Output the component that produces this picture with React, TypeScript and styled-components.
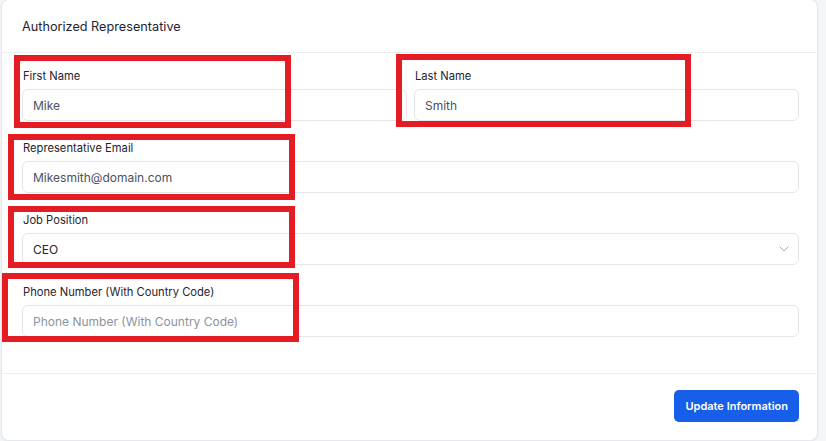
import React from 'react';
import styled, { createGlobalStyle } from 'styled-components';

const GlobalStyle = createGlobalStyle`
  html, body {
    margin: 0;
    padding: 0;
    background: #f4f5f7;
    font-family: Inter, "Noto Sans", Arial, sans-serif;
  }
`;

interface Mark {
  left: number;
  top: number;
  right: number;
  bottom: number;
}

// red annotation boxes drawn over the form
const marks: Mark[] = [
  { left: 14, top: 55, right: 291, bottom: 128 },
  { left: 396, top: 54, right: 691, bottom: 127 },
  { left: 8, top: 134, right: 295, bottom: 200 },
  { left: 8, top: 206, right: 295, bottom: 268 },
  { left: 2, top: 273, right: 299, bottom: 342 },
];

const Chevron = () => (
  <svg width="10" height="6" viewBox="0 0 10 6" fill="none">
    <path d="M1 1l4 4 4-4" stroke="#a3a8b3" strokeWidth="1" strokeLinecap="round" strokeLinejoin="round"/>
  </svg>
);

const App = () => {
  return (
    <Page>
      <GlobalStyle/>
      <Card>
        <Header>Authorized Representative</Header>
        <Body>
          <Row>
            <Field>
              <Label>First Name</Label>
              <Input defaultValue="Mike"/>
            </Field>
            <Field>
              <Label>Last Name</Label>
              <Input defaultValue="Smith"/>
            </Field>
          </Row>
          <Field>
            <Label>Representative Email</Label>
            <Input defaultValue="Mikesmith@domain.com"/>
          </Field>
          <Field>
            <Label>Job Position</Label>
            <SelectBox>
              <span>CEO</span>
              <Chevron/>
            </SelectBox>
          </Field>
          <Field>
            <Label>Phone Number (With Country Code)</Label>
            <Input placeholder="Phone Number (With Country Code)"/>
          </Field>
        </Body>
        <Footer>
          <Button>Update Information</Button>
        </Footer>
      </Card>
      {marks.map((m, i) =>
        <Highlight key={i} style={{ left: m.left, top: m.top, width: m.right - m.left, height: m.bottom - m.top }}/>
      )}
    </Page>
  );
};

const Page = styled.div`
  position: relative;
  width: 826px;
  height: 441px;
  overflow: hidden;
  padding: 0 0 0 1px;
  box-sizing: border-box;
`;

const Card = styled.div`
  width: 817px;
  margin-top: -1px;
  height: 442px;
  box-sizing: border-box;
  background: #fff;
  border: 1px solid #e6e8ec;
  border-radius: 8px;
  box-shadow: 0 1px 2px rgba(16, 24, 40, 0.05);
  display: flex;
  flex-direction: column;
`;

const Header = styled.div`
  height: 53px;
  box-sizing: border-box;
  padding: 0 20px;
  display: flex;
  align-items: center;
  border-bottom: 1px solid #eceef1;
  font-size: 12.7px;
  color: #1f2430;
`;

const Body = styled.div`
  padding: 15px 18px 36px 20px;
  display: flex;
  flex-direction: column;
  gap: 19px;
  border-bottom: 1px solid #eceef1;
`;

const Row = styled.div`
  display: grid;
  grid-template-columns: 1fr 1fr;
  gap: 7px;
`;

const Field = styled.div`
  display: flex;
  flex-direction: column;
  gap: 5px;
`;

const Label = styled.label`
  padding-left: 1px;
  font-size: 11.2px;
  line-height: 16px;
  color: #1f2430;
`;

const Input = styled.input`
  height: 32px;
  box-sizing: border-box;
  width: 100%;
  border: 1px solid #e3e5ea;
  border-radius: 6px;
  padding: 0 10px;
  font-family: inherit;
  font-size: 12px;
  color: #4a5161;
  background: #fff;
  outline: none;

  &::placeholder {
    color: #8c93a0;
  }
`;

const SelectBox = styled.div`
  height: 32px;
  box-sizing: border-box;
  border: 1px solid #e3e5ea;
  border-radius: 6px;
  padding: 0 9px 0 10px;
  display: flex;
  align-items: center;
  justify-content: space-between;
  font-size: 12px;
  color: #1f2430;
`;

const Footer = styled.div`
  flex: 1;
  display: flex;
  justify-content: flex-end;
  align-items: flex-start;
  padding: 16px 18px 0;
`;

const Button = styled.button`
  height: 32px;
  padding: 0 11px;
  border: none;
  border-radius: 5px;
  background: #175ee9;
  color: #fff;
  font-family: inherit;
  font-size: 11px;
  font-weight: 600;
  cursor: pointer;
`;

const Highlight = styled.div`
  position: absolute;
  box-sizing: border-box;
  border: 6px solid #e31d23;
  pointer-events: none;
`;

export default App;
